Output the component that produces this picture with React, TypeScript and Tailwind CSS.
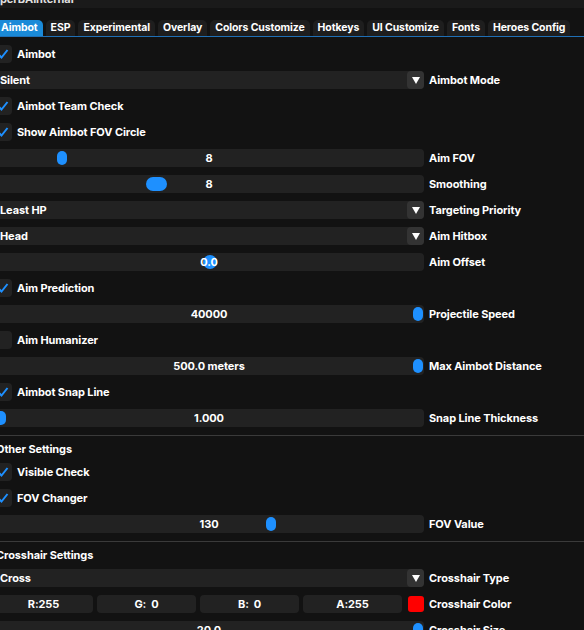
import React from "react";

const tabs = [
  "Aimbot",
  "ESP",
  "Experimental",
  "Overlay",
  "Colors Customize",
  "Hotkeys",
  "UI Customize",
  "Fonts",
  "Heroes Config",
];

function Checkbox({ label, checked }: { label: string; checked: boolean }) {
  return (
    <div className="flex items-center h-[18px] gap-[5px]">
      <div className="w-[18px] h-[18px] rounded-[4px] bg-[#222222] flex items-center justify-center">
        {checked && (
          <svg width="12" height="12" viewBox="0 0 12 12">
            <path d="M1.5 6.5 L4.5 9.5 L10.5 2" fill="none" stroke="#1e90ff" strokeWidth="2" />
          </svg>
        )}
      </div>
      <span>{label}</span>
    </div>
  );
}

function Combo({ value, label }: { value: string; label: string }) {
  return (
    <div className="flex items-center h-[18px] gap-[5px]">
      <div className="w-[430px] h-[18px] rounded-[4px] bg-[#222222] flex items-center">
        <span className="flex-1 pl-[6px]">{value}</span>
        <div className="w-[17px] h-[18px] rounded-[4px] bg-[#333333] flex items-center justify-center">
          <svg width="8" height="7" viewBox="0 0 8 7">
            <path d="M0 0 L8 0 L4 7 Z" fill="#ffffff" />
          </svg>
        </div>
      </div>
      <span>{label}</span>
    </div>
  );
}

function Slider({ value, label, grab }: { value: string; label: string; grab: string }) {
  return (
    <div className="flex items-center h-[18px] gap-[5px]">
      <div className="relative w-[430px] h-[18px] rounded-[4px] bg-[#222222] flex items-center justify-center">
        <div className={"absolute top-[2px] h-[14px] rounded-full bg-[#1e90ff] " + grab} />
        <span className="relative">{value}</span>
      </div>
      <span>{label}</span>
    </div>
  );
}

function Separator() {
  return <div className="h-px bg-[#3a3a3a] w-[590px]" />;
}

export default function App() {
  return (
    <div
      className="w-[584px] h-[630px] overflow-hidden bg-[#121212] text-white text-[11px] font-bold leading-none tracking-[-0.1px]"
      style={{ fontFamily: "Inter, 'Noto Sans', sans-serif" }}
    >
      <div className="h-[8px] bg-[#1a1a1a] overflow-hidden">
        <div className="-mt-[6px] text-[#e0e0e0]">perBAInternal</div>
      </div>

      <div className="-ml-[4px] mt-[12px] flex gap-[3px] h-[16px] whitespace-nowrap text-[10.5px]">
        {tabs.map((t, i) => (
          <div
            key={t}
            className={
              i === 0
                ? "shrink-0 px-[5px] rounded-t-[5px] bg-[#1a8ad8] flex items-center"
                : "shrink-0 px-[5px] rounded-t-[5px] bg-[#1e1e1e] flex items-center"
            }
          >
            {t}
          </div>
        ))}
      </div>
      <div className="h-px bg-[#1f6fb5]" />

      <div className="-ml-[6px] pt-[8px] flex flex-col gap-[8px]">
        <Checkbox label="Aimbot" checked />
        <Combo value="Silent" label="Aimbot Mode" />
        <Checkbox label="Aimbot Team Check" checked />
        <Checkbox label="Show Aimbot FOV Circle" checked />
        <Slider value="8" label="Aim FOV" grab="left-[63px] w-[10px]" />
        <Slider value="8" label="Smoothing" grab="left-[152px] w-[21px]" />
        <Combo value="Least HP" label="Targeting Priority" />
        <Combo value="Head" label="Aim Hitbox" />
        <Slider value="0.0" label="Aim Offset" grab="left-[209px] w-[14px]" />
        <Checkbox label="Aim Prediction" checked />
        <Slider value="40000" label="Projectile Speed" grab="left-[419px] w-[10px]" />
        <Checkbox label="Aim Humanizer" checked={false} />
        <Slider value="500.0 meters" label="Max Aimbot Distance" grab="left-[419px] w-[10px]" />
        <Checkbox label="Aimbot Snap Line" checked />
        <Slider value="1.000" label="Snap Line Thickness" grab="left-[2px] w-[10px]" />
        <Separator />
      </div>

      <div className="-ml-[6px] flex flex-col">
        <div className="h-[14px] mt-[6px] flex items-center pl-[2px] whitespace-nowrap">Other Settings</div>
        <div className="mt-[7px] flex flex-col gap-[8px]">
          <Checkbox label="Visible Check" checked />
          <Checkbox label="FOV Changer" checked />
          <Slider value="130" label="FOV Value" grab="left-[272px] w-[10px]" />
          <Separator />
        </div>
        <div className="h-[14px] mt-[6px] flex items-center pl-[2px] whitespace-nowrap">Crosshair Settings</div>
        <div className="mt-[7px] flex flex-col gap-[8px]">
          <Combo value="Cross" label="Crosshair Type" />
          <div className="flex items-center h-[18px] gap-[5px]">
            <div className="w-[430px] flex items-center gap-[4px]">
              {["R:255", "G:  0", "B:  0", "A:255"].map((c) => (
                <div
                  key={c}
                  className="w-[99px] h-[18px] rounded-[4px] bg-[#222222] flex items-center justify-center whitespace-pre"
                >
                  {c}
                </div>
              ))}
              <div className="w-[16px] h-[16px] ml-[2px] rounded-[3px] bg-[#ff0000]" />
            </div>
            <span>Crosshair Color</span>
          </div>
          <Slider value="20.0" label="Crosshair Size" grab="left-[419px] w-[10px]" />
        </div>
      </div>
    </div>
  );
}
